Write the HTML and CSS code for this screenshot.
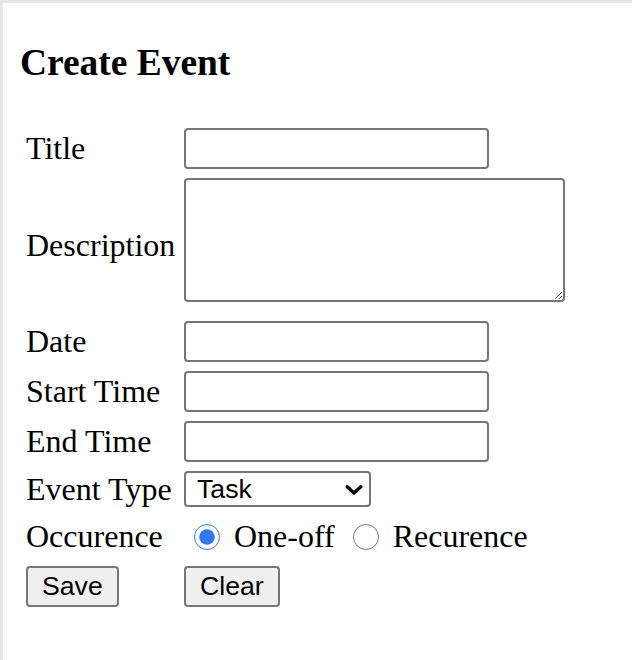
FILE: index.html
```html
<!DOCTYPE html>
<html lang="en">
<head>
<meta charset="UTF-8">
<title>Create Event</title>
<link rel="stylesheet" href="styles.css">
</head>
<body>

<!-- ─── PAGE ────────────────────────────────────────────────────────────── -->
<div class="page">
  <h1>Create Event</h1>

  <form id="eventForm" class="event-form">
    <!-- Title -->
    <label for="title">Title</label>
    <input type="text" id="title" name="title" class="field">

    <!-- Description -->
    <label for="desc">Description</label>
    <textarea id="desc" name="desc" class="field area"></textarea>

    <!-- Date / times -->
    <label for="date">Date</label>
    <input type="text" id="date" name="date" class="field">

    <label for="start">Start Time</label>
    <input type="text" id="start" name="start" class="field">

    <label for="end">End Time</label>
    <input type="text" id="end" name="end" class="field">

    <!-- Type -->
    <label for="type">Event Type</label>
    <span class="select-wrap">
      <select id="type" name="type">
        <option>Task</option>
        <option>Meeting</option>
        <option>Reminder</option>
      </select>
      <svg class="chevron" width="18" height="10" viewBox="0 0 18 10">
        <path d="M2.2 1.8 L9 8 L15.8 1.8" fill="none" stroke="#000" stroke-width="3.4" stroke-linecap="round" stroke-linejoin="round"/>
      </svg>
    </span>

    <!-- Occurence -->
    <span class="lbl">Occurence</span>
    <div class="choices">
      <label class="choice"><input type="radio" name="occ" value="once" checked>One-off</label>
      <label class="choice"><input type="radio" name="occ" value="recur">Recurence</label>
    </div>

    <!-- Actions -->
    <div><button type="submit" class="btn">Save</button></div>
    <div><button type="reset" class="btn">Clear</button></div>
  </form>
</div>

</body>
</html>
```

FILE: styles.css
```css
:root{
  --edge: #e6e6e6;       /* light frame on top / left */
  --ctrl-border: #767676;
  --btn-bg: #efefef;
}
*{ box-sizing:border-box; }

html, body{ margin:0; background:#fff; }

body{
  font-family: "Liberation Serif", "Times New Roman", serif;
  font-size:32px;
  color:#000;
}

/* page frame */
.page{
  min-height:100vh;
  border-top:3px solid var(--edge);
  border-left:3px solid var(--edge);
  padding:0 16px 16px 17px;
}

h1{
  font-size:37.44px;
  font-weight:bold;
  margin:38px 0 44px;
}

/* label column + control column */
.event-form{
  display:grid;
  grid-template-columns:158px auto;
  justify-content:start;
  align-items:center;
  row-gap:9px;
  padding-left:6px;
}
.event-form label,
.event-form .lbl{ line-height:1.15; }

/* text inputs */
.field{
  width:305px;
  height:41px;
  border:2px solid var(--ctrl-border);
  border-radius:4px;
  padding:2px 6px;
  font:26.67px "Liberation Sans", Arial, sans-serif;
  background:#fff;
}
.field.area{
  width:381px;
  height:124px;
  margin-bottom:10px;
  resize:both;
}

/* select with drawn chevron */
.select-wrap{
  position:relative;
  width:187px;
}
.select-wrap select{
  appearance:none;
  -webkit-appearance:none;
  display:block;
  width:187px;
  height:36px;
  border:2px solid var(--ctrl-border);
  border-radius:4px;
  background:#fff;
  padding:0 30px 0 11px;
  font:26.67px "Liberation Sans", Arial, sans-serif;
  color:#000;
}
.chevron{
  position:absolute;
  right:8px;
  top:14px;
  pointer-events:none;
}

/* radios */
.choices{
  display:flex;
  align-items:center;
  min-height:40px;
}
.choice{
  display:inline-flex;
  align-items:center;
}
.choice + .choice{ margin-left:8px; }
.choice input{
  width:26px;
  height:26px;
  margin:0 14px 0 10px;
  accent-color:#3478f6;
}

/* buttons */
.btn{
  height:41px;
  padding:0 14px;
  border:2px solid var(--ctrl-border);
  border-radius:4px;
  background:var(--btn-bg);
  font:26.67px "Liberation Sans", Arial, sans-serif;
  color:#000;
  cursor:pointer;
}
```
